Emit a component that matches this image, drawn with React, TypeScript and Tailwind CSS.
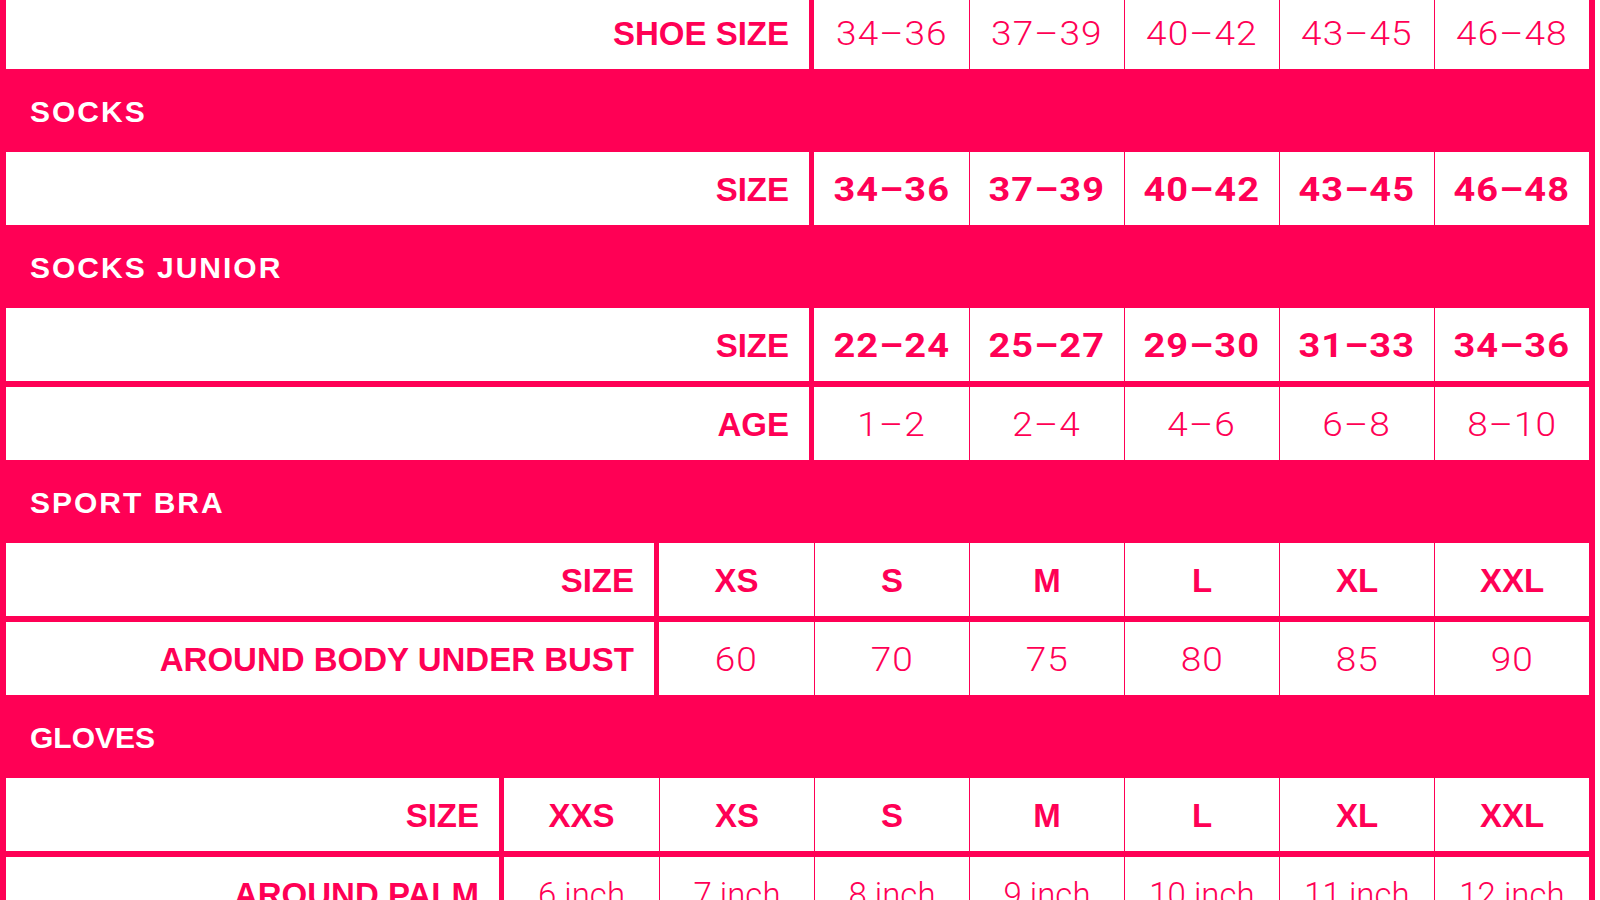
// Size chart — pink table with section headers and white cells.

type Kind = "num" | "numBold" | "letter" | "text";

interface RowDef {
  label: string;
  values: string[];
  kind: Kind;
}

const valueClass: Record<Kind, string> = {
  num: "font-['Roboto',sans-serif] font-light tracking-[1px] scale-x-[1.12]",
  numBold: "font-['Roboto',sans-serif] font-bold tracking-[1px] scale-x-[1.15]",
  letter: "font-['Liberation_Sans',Arial,sans-serif] font-bold",
  text: "font-['Roboto',sans-serif] font-light",
};

function Row({ label, values, kind }: RowDef) {
  return (
    <div className="flex h-[73px] gap-[5px]">
      <div className="flex flex-1 items-center justify-end bg-white pr-[20px] pt-[2px] font-['Liberation_Sans',Arial,sans-serif] text-[33px] font-bold leading-none text-[#ff0055]">
        {label}
      </div>
      <div className="flex bg-white">
        {values.map((v, i) => (
          <div
            key={i}
            className={`flex w-[155px] items-center justify-center pt-[2px] text-[33px] leading-none text-[#ff0055] ${i > 0 ? "border-l border-[#ff0055]" : ""}`}
          >
            <span className={`inline-block ${valueClass[kind]}`}>{v}</span>
          </div>
        ))}
      </div>
    </div>
  );
}

function Header({ title, tight }: { title: string; tight?: boolean }) {
  return (
    <div
      className={`flex h-[71px] items-center pl-[24px] pt-[2px] font-['Liberation_Sans',Arial,sans-serif] text-[30px] font-bold leading-none text-white ${tight ? "" : "tracking-[2px]"}`}
    >
      {title}
    </div>
  );
}

export default function App() {
  return (
    <div className="h-screen overflow-hidden bg-white">
      <div className="mt-[-4px] flex w-[1595px] flex-col gap-[6px] bg-[#ff0055] px-[6px] pb-[6px]">
        <Row label="SHOE SIZE" kind="num" values={["34–36", "37–39", "40–42", "43–45", "46–48"]} />

        <Header title="SOCKS" />
        <Row label="SIZE" kind="numBold" values={["34–36", "37–39", "40–42", "43–45", "46–48"]} />

        <Header title="SOCKS JUNIOR" />
        <Row label="SIZE" kind="numBold" values={["22–24", "25–27", "29–30", "31–33", "34–36"]} />
        <Row label="AGE" kind="num" values={["1–2", "2–4", "4–6", "6–8", "8–10"]} />

        <Header title="SPORT BRA" />
        <Row label="SIZE" kind="letter" values={["XS", "S", "M", "L", "XL", "XXL"]} />
        <Row label="AROUND BODY UNDER BUST" kind="num" values={["60", "70", "75", "80", "85", "90"]} />

        <Header title="GLOVES" tight />
        <Row label="SIZE" kind="letter" values={["XXS", "XS", "S", "M", "L", "XL", "XXL"]} />
        <Row
          label="AROUND PALM"
          kind="text"
          values={["6 inch", "7 inch", "8 inch", "9 inch", "10 inch", "11 inch", "12 inch"]}
        />
      </div>
    </div>
  );
}
